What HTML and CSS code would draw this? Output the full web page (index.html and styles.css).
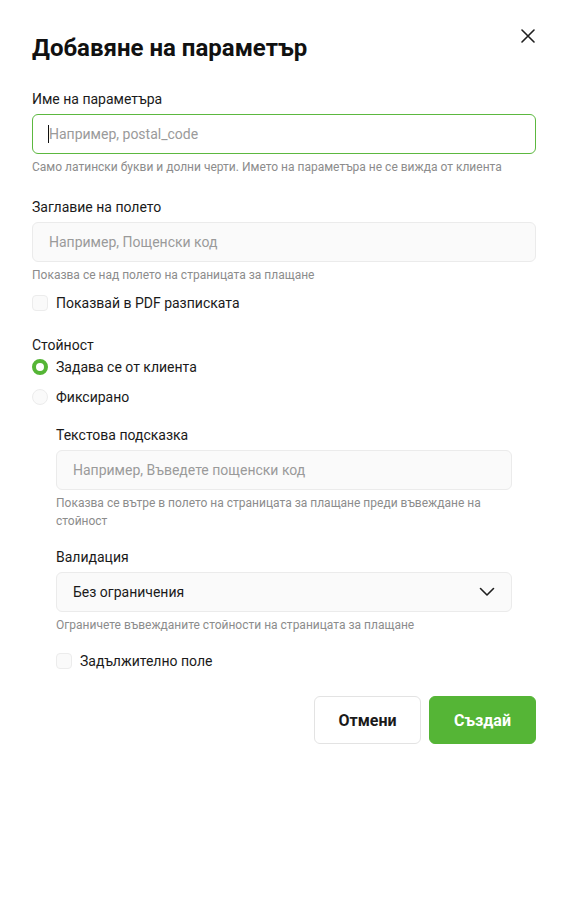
FILE: index.html
```html
<!DOCTYPE html>
<html lang="bg">
<head>
<meta charset="utf-8">
<link rel="stylesheet" href="styles.css">
</head>
<body>
<div class="dialog">
  <div class="header">
    <h1 class="title">Добавяне на параметър</h1>
    <button class="close" aria-label="Затвори">
      <svg width="14" height="14" viewBox="0 0 14 14"><path d="M1 1L13 13M13 1L1 13" stroke="#1f1f1f" stroke-width="1.6" stroke-linecap="round"/></svg>
    </button>
  </div>

  <div class="field f1">
    <label class="label">Име на параметъра</label>
    <div class="input-wrap">
      <input class="input focused" placeholder="Например, postal_code">
      <span class="caret"></span>
    </div>
    <div class="help">Само латински букви и долни черти. Името на параметъра не се вижда от клиента</div>
  </div>

  <div class="field f2">
    <label class="label">Заглавие на полето</label>
    <input class="input" placeholder="Например, Пощенски код">
    <div class="help">Показва се над полето на страницата за плащане</div>
  </div>

  <div class="check-row c1">
    <span class="checkbox"></span>
    <span class="check-text">Показвай в PDF разписката</span>
  </div>

  <div class="label value-label">Стойност</div>
  <div class="radio-row r1">
    <span class="radio checked"></span>
    <span class="check-text">Задава се от клиента</span>
  </div>
  <div class="radio-row r2">
    <span class="radio"></span>
    <span class="check-text">Фиксирано</span>
  </div>

  <div class="nested">
    <div class="field f3">
      <label class="label">Текстова подсказка</label>
      <input class="input" placeholder="Например, Въведете пощенски код">
      <div class="help">Показва се вътре в полето на страницата за плащане преди въвеждане на стойност</div>
    </div>

    <div class="field f4">
      <label class="label">Валидация</label>
      <div class="select">
        <span>Без ограничения</span>
        <svg width="16" height="10" viewBox="0 0 16 10"><path d="M1.5 1.5L8 8L14.5 1.5" fill="none" stroke="#1f1f1f" stroke-width="1.6" stroke-linecap="round" stroke-linejoin="round"/></svg>
      </div>
      <div class="help">Ограничете въвежданите стойности на страницата за плащане</div>
    </div>

    <div class="check-row c2">
      <span class="checkbox"></span>
      <span class="check-text">Задължително поле</span>
    </div>
  </div>

  <div class="actions">
    <button class="btn secondary">Отмени</button>
    <button class="btn primary">Създай</button>
  </div>
</div>
</body>
</html>
```
FILE: styles.css
```css
* { box-sizing: border-box; }
html, body { margin: 0; padding: 0; background: #fff; }
body {
  font-family: Roboto, "Liberation Sans", Arial, sans-serif;
  color: #1a1a1a;
}
.dialog {
  width: 568px;
  padding: 32px 32px 0 32px;
  display: flex;
  flex-direction: column;
}
.header {
  display: flex;
  justify-content: space-between;
  align-items: flex-start;
}
.title {
  margin: 0;
  font-size: 24px;
  line-height: 32px;
  font-weight: 700;
  color: #111;
}
.close {
  border: 0;
  background: none;
  padding: 0;
  margin: -3px 1px 0 0;
  width: 14px;
  height: 14px;
  display: flex;
  cursor: pointer;
}
.field { display: flex; flex-direction: column; }
.f1 { margin-top: 25px; }
.f2 { margin-top: 21px; }
.label {
  font-size: 14px;
  line-height: 20px;
  color: #1a1a1a;
  margin-bottom: 5px;
}
.input-wrap { position: relative; display: flex; }
.input {
  width: 100%;
  height: 40px;
  border: 1px solid #ebebeb;
  background: #fafafa;
  border-radius: 6px;
  padding: 0 16px;
  font-family: inherit;
  font-size: 14px;
  color: #1a1a1a;
  outline: none;
}
.input::placeholder { color: #9a9a9a; opacity: 1; }
.input.focused {
  background: #fff;
  border-color: #5cb83f;
}
.caret {
  position: absolute;
  left: 16px;
  top: 11px;
  width: 1px;
  height: 18px;
  background: #111;
}
.help {
  margin-top: 4px;
  font-size: 12px;
  line-height: 18px;
  color: #8c8c8c;
}
.check-row, .radio-row {
  display: flex;
  align-items: center;
  gap: 8px;
  height: 20px;
}
.c1 { margin-top: 9px; }
.checkbox {
  width: 16px;
  height: 16px;
  border: 1px solid #ececec;
  background: #fafafa;
  border-radius: 4px;
}
.check-text {
  font-size: 14px;
  line-height: 20px;
  color: #1a1a1a;
}
.value-label { margin-top: 22px; margin-bottom: 2px; }
.r2 { margin-top: 10px; }
.radio {
  width: 16px;
  height: 16px;
  border-radius: 50%;
  border: 1px solid #ececec;
  background: #fafafa;
}
.radio.checked {
  border: 4px solid #55b536;
  background: #fff;
}
.nested {
  padding-left: 24px;
  padding-right: 24px;
  display: flex;
  flex-direction: column;
}
.f3 { margin-top: 18px; }
.f4 { margin-top: 17px; }
.select {
  height: 40px;
  border: 1px solid #ebebeb;
  background: #fafafa;
  border-radius: 6px;
  padding: 0 16px;
  display: flex;
  align-items: center;
  justify-content: space-between;
  font-size: 14px;
  color: #1a1a1a;
}
.c2 { margin-top: 17px; }
.actions {
  margin-top: 25px;
  display: flex;
  justify-content: flex-end;
  gap: 8px;
}
.btn {
  width: 107px;
  height: 48px;
  border-radius: 6px;
  font-family: inherit;
  font-size: 16px;
  font-weight: 700;
  cursor: pointer;
}
.secondary {
  background: #fff;
  border: 1px solid #e3e3e3;
  color: #1a1a1a;
}
.primary {
  background: #55b536;
  border: 1px solid #55b536;
  color: #fff;
}
```
